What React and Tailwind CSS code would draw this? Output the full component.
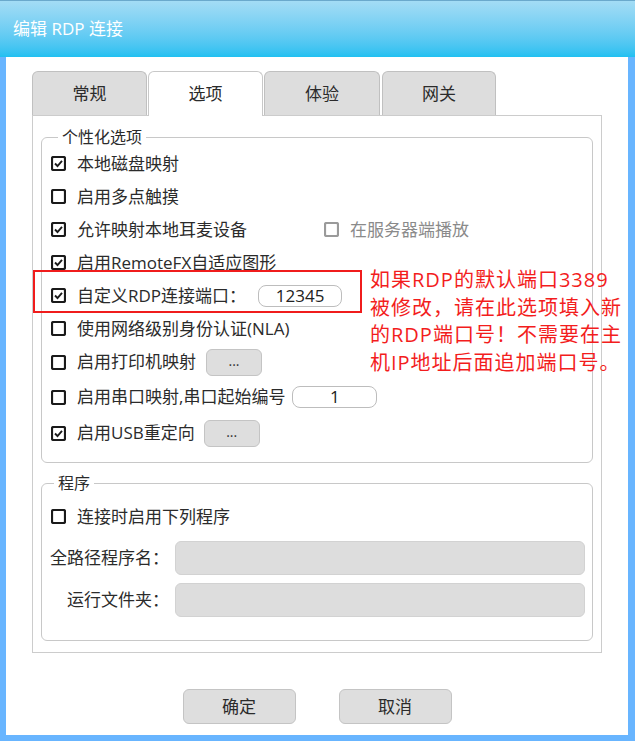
import React from 'react';

const font = {fontFamily: '"Open Sans", "Noto Sans CJK SC", sans-serif'};

function Check({checked, disabled}) {
  const c = disabled ? '#9a9a9a' : '#1a1a1a';
  return (
    <svg width="15" height="15" viewBox="0 0 15 15" className="shrink-0">
      <rect x="1" y="1" width="13" height="13" rx="1.5" fill="none" stroke={c} strokeWidth="2.2" />
      {checked && <path d="M4 7.5 L6.5 10 L11 4.8" fill="none" stroke={c} strokeWidth="1.9" />}
    </svg>
  );
}

function Row({checked, label, h = 'h-[33px]', children}) {
  return (
    <div className={`flex items-center ${h}`}>
      <Check checked={checked} />
      <span className="ml-[11px] text-[17px] text-[#2b2b2b]">{label}</span>
      {children}
    </div>
  );
}

function DotsButton({ml}) {
  return (
    <div
      className={`${ml} w-[56px] h-[27px] rounded-md border border-[#c4c4c4] bg-[#dedede] flex items-center justify-center text-[14px] text-[#333] pb-[4px]`}
    >
      ...
    </div>
  );
}

function Tab({label, active, w}) {
  return (
    <div
      className={
        'flex items-center justify-center rounded-t-md border border-b-0 text-[17px] text-[#2b2b2b] ' +
        w +
        (active ? ' bg-white border-[#c8c8c8] relative z-10 h-[45px] -mb-px' : ' h-[44px] bg-[#dddddd] border-[#c0c0c0]')
      }
    >
      {label}
    </div>
  );
}

export default function App() {
  return (
    <div className="w-[635px] h-[741px] flex flex-col bg-[#68b5ff]" style={font}>
      <div className="h-[57px] shrink-0 border-t border-[#6aa9cc] bg-gradient-to-b from-[#a3dcf5] to-[#1fc0f1] flex items-center pl-[13px] pb-[1px]">
        <span className="text-[17px] text-white">编辑 RDP 连接</span>
      </div>
      <div className="relative flex-1 ml-[6px] mr-[7px] mb-[6px] bg-white flex flex-col items-center">
        <div className="w-[570px] mt-[14px]">
          <div className="flex gap-[1px]">
            <Tab label="常规" w="w-[115px]" />
            <Tab label="选项" w="w-[115px]" active />
            <Tab label="体验" w="w-[116px]" />
            <Tab label="网关" w="w-[114px] ml-[1px]" />
          </div>
          <div className="h-[538px] border border-[#cccccc] px-[8px] pt-[10px]">
            <fieldset className="border border-[#c8c8c8] rounded-md pl-[9px] pb-[11px]">
              <legend className="ml-[7px] px-[4px] text-[16px] leading-[22px] text-[#2b2b2b]">个性化选项</legend>
              <div className="-mt-[1px]">
                <Row checked label="本地磁盘映射" />
                <Row label="启用多点触摸" />
                <Row checked label="允许映射本地耳麦设备">
                  <div className="ml-[77px] flex items-center">
                    <Check disabled />
                    <span className="ml-[11px] text-[17px] text-[#8a8a8a]">在服务器端播放</span>
                  </div>
                </Row>
                <Row checked label="启用RemoteFX自适应图形" />
                <Row checked label="自定义RDP连接端口：">
                  <div className="ml-[12px] w-[84px] h-[22px] rounded-lg border border-[#bdbdbd] flex items-center justify-center text-[17px] text-[#222]">
                    12345
                  </div>
                </Row>
                <Row label="使用网络级别身份认证(NLA)" />
                <Row label="启用打印机映射" h="h-[34px]">
                  <DotsButton ml="ml-[10px]" />
                </Row>
                <Row label="启用串口映射,串口起始编号" h="h-[36px]">
                  <div className="ml-[7px] w-[85px] h-[22px] rounded-lg border border-[#bdbdbd] flex items-center justify-center text-[17px] text-[#222]">
                    1
                  </div>
                </Row>
                <Row checked label="启用USB重定向" h="h-[36px]">
                  <DotsButton ml="ml-[9px]" />
                </Row>
              </div>
            </fieldset>
            <fieldset className="mt-[9px] border border-[#c8c8c8] rounded-md pl-[9px] pr-[7px] pb-[23px]">
              <legend className="ml-[3px] px-[4px] text-[16px] leading-[22px] text-[#2b2b2b]">程序</legend>
              <div className="pt-[6px]">
                <Row label="连接时启用下列程序" />
              </div>
              <div className="mt-[8px] flex flex-col gap-[8px]">
                {['全路径程序名：', '运行文件夹：'].map((l) => (
                  <div key={l} className="flex items-center">
                    <span className="w-[121px] -ml-[3px] text-right text-[17px] text-[#2b2b2b] shrink-0">{l}</span>
                    <div className="ml-[6px] flex-1 h-[34px] rounded-md border border-[#d2d2d2] bg-[#dddddd]" />
                  </div>
                ))}
              </div>
            </fieldset>
          </div>
        </div>
        <div className="mt-[36px] flex gap-[43px]">
          <div className="w-[113px] h-[35px] rounded-md border border-[#c4c4c4] bg-[#dedede] flex items-center justify-center text-[17px] text-[#2b2b2b]">
            确定
          </div>
          <div className="w-[113px] h-[35px] rounded-md border border-[#c4c4c4] bg-[#dedede] flex items-center justify-center text-[17px] text-[#2b2b2b]">
            取消
          </div>
        </div>
        <div className="absolute left-[27px] top-[213px] w-[329px] h-[43px] border-2 border-[#f01c1c]" />
        <div className="absolute left-[364px] top-[209px] w-[262px] text-[20px] leading-[27.5px] text-[#f31d1d] tracking-[1px]">
          如果RDP的默认端口3389<br />
          被修改，请在此选项填入新<br />
          的RDP端口号！不需要在主<br />
          机IP地址后面追加端口号。
        </div>
      </div>
    </div>
  );
}
